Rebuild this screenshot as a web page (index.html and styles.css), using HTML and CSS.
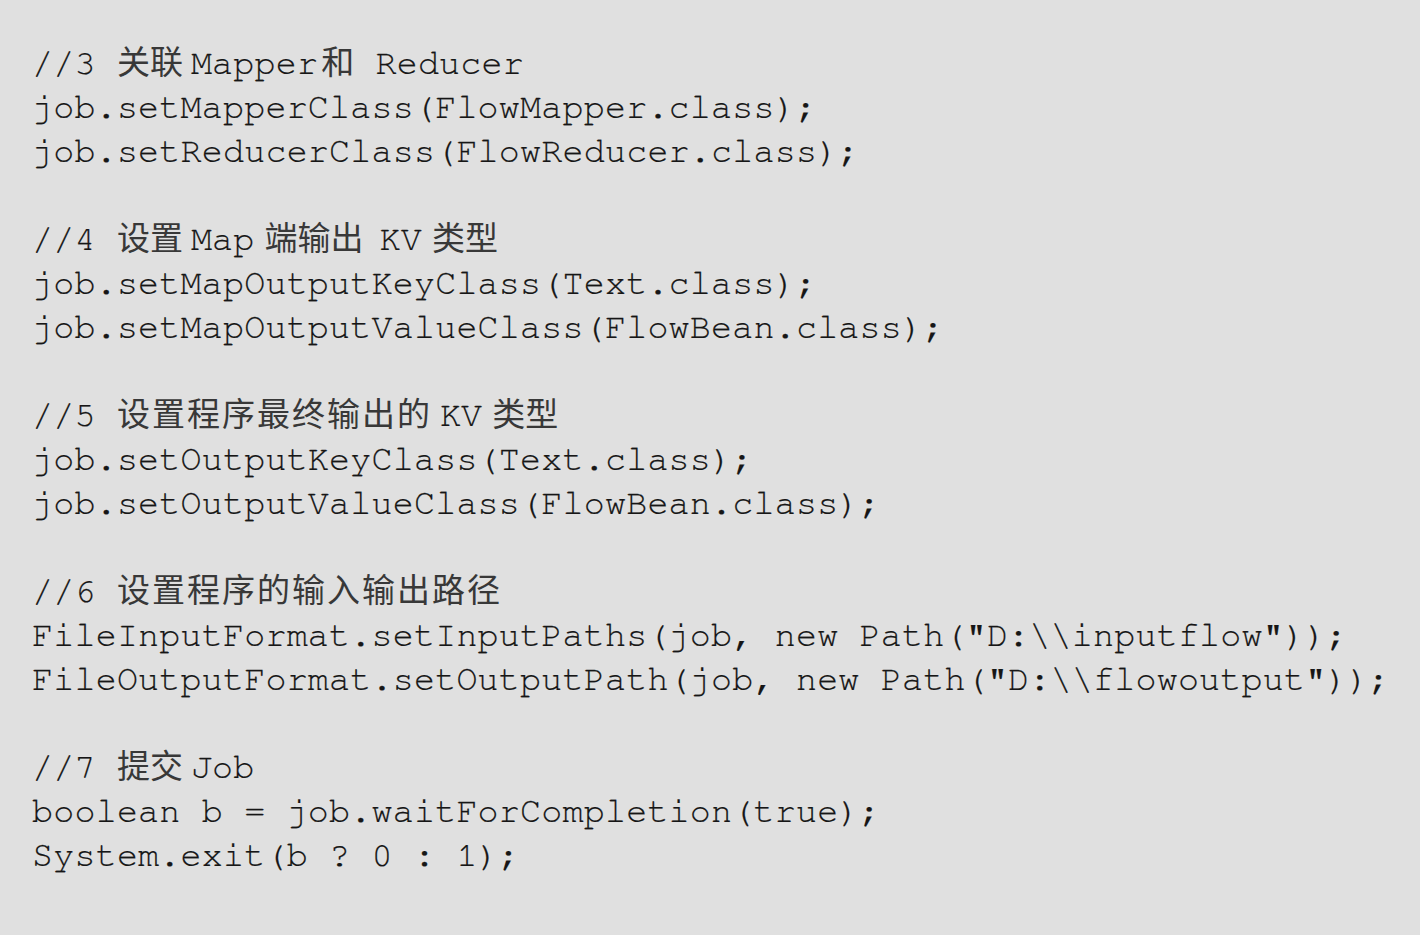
FILE: index.html
```html
<!DOCTYPE html>
<html lang="zh-CN">
<head>
<meta charset="utf-8">
<title>Job driver</title>
<link rel="stylesheet" href="styles.css">
</head>
<body>
<main class="code">
<div class="ln">//3 <span class="zh gr">关联</span>Mapper<span class="zh gl1">和</span> Reducer</div>
<div class="ln">job.setMapperClass(FlowMapper.class);</div>
<div class="ln">job.setReducerClass(FlowReducer.class);</div>
<div class="ln"></div>
<div class="ln">//4 <span class="zh gr">设置</span>Map<span class="zh gl gr2">端输出</span>KV<span class="zh gl">类型</span></div>
<div class="ln">job.setMapOutputKeyClass(Text.class);</div>
<div class="ln">job.setMapOutputValueClass(FlowBean.class);</div>
<div class="ln"></div>
<div class="ln">//5 <span class="zh wide gr">设置程序最终输出的</span>KV<span class="zh gl">类型</span></div>
<div class="ln">job.setOutputKeyClass(Text.class);</div>
<div class="ln">job.setOutputValueClass(FlowBean.class);</div>
<div class="ln"></div>
<div class="ln">//6 <span class="zh wide">设置程序的输入输出路径</span></div>
<div class="ln">FileInputFormat.setInputPaths(job, new Path("D:\\inputflow"));</div>
<div class="ln">FileOutputFormat.setOutputPath(job, new Path("D:\\flowoutput"));</div>
<div class="ln"></div>
<div class="ln">//7 <span class="zh gr">提交</span>Job</div>
<div class="ln">boolean b = job.waitForCompletion(true);</div>
<div class="ln">System.exit(b ? 0 : 1);</div>
</main>
</body>
</html>
```

FILE: styles.css
```css
html, body {
  margin: 0;
  padding: 0;
  background: #e0e0e0;
}

body {
  width: 1420px;
  height: 935px;
  overflow: hidden;
}

.code {
  padding: 42px 0 0 32px;
  font-family: "Nimbus Mono PS", "Nimbus Mono L", "FreeMono", "Courier 10 Pitch", "Courier New", "Liberation Mono", "Noto Sans CJK SC", monospace;
  font-size: 35px;
  letter-spacing: 0.22px;
  color: #161616;
  -webkit-text-stroke: 0.2px #161616;
}

.ln {
  height: 44px;
  line-height: 44px;
  white-space: pre;
}

.zh {
  font-family: "Noto Sans CJK SC", sans-serif;
  font-size: 33px;
  letter-spacing: 0;
  line-height: 1;
  color: #383838;
  -webkit-text-stroke: 0;
}

.zh.wide {
  letter-spacing: 2px;
}

.gl {
  margin-left: 10px;
}

.gl1 {
  margin-left: 3px;
}

.gr {
  margin-right: 8px;
}

.gr2 {
  margin-right: 16px;
}
```
